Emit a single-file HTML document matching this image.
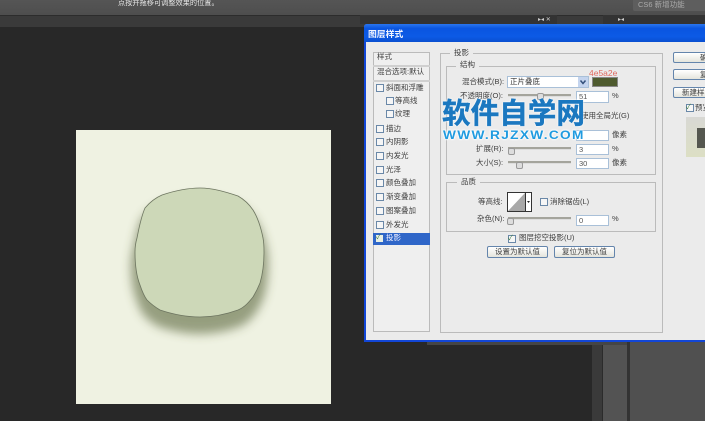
<!DOCTYPE html>
<html><head><meta charset="utf-8">
<style>
html,body{margin:0;padding:0}
body{width:705px;height:421px;overflow:hidden;position:relative;background:#282828;font-family:"Liberation Sans","Noto Sans CJK SC",sans-serif}
#w{position:absolute;left:0;top:0;width:705px;height:421px;filter:blur(.35px)}
.a{position:absolute}
.t{position:absolute;font-size:7.5px;line-height:12px;color:#3e3e3e;white-space:nowrap}
.cb{position:absolute;width:6px;height:6px;border:1px solid #6a88a8;background:#f6f6f6}
.ln{position:absolute;left:373px;width:57px;height:1px;background:#d0d0d0}
.fs{position:absolute;border:1px solid #bbb;box-sizing:border-box}
.lg{position:absolute;background:#ebebeb;font-size:7.5px;line-height:10px;padding:0 4px;color:#3e3e3e;white-space:nowrap}
.inp{position:absolute;box-sizing:border-box;width:34px;height:12px;background:#fff;border:1px solid #a9c0d8;font-size:7.5px;line-height:10px;padding-left:2px;color:#555}
.tr{position:absolute;height:2px;background:#a4a49c;border-bottom:1px solid #ddd;width:63px;left:508px}
.th{position:absolute;width:5px;height:5px;border:1px solid #999;border-radius:2px;background:#ddd}
.btn{position:absolute;box-sizing:border-box;height:12px;background:linear-gradient(#fff,#e4e4dc);border:1px solid #6485ac;border-radius:2px;font-size:7.5px;line-height:10px;color:#3e3e3e;text-align:center;white-space:nowrap;overflow:hidden}
</style></head><body><div id="w">
<div class="a" style="left:0;top:0;width:705px;height:15px;background:linear-gradient(#555,#4e4e4e)"></div>
<div class="t" style="left:118px;top:-3px;color:#e6e6e6;font-size:7.2px">点按并拖移可调整效果的位置。</div>
<div class="a" style="left:633px;top:0;width:72px;height:11px;background:#5e5e5e;border-radius:0 0 0 2px"></div>
<div class="t" style="left:638px;top:-1px;color:#aaa;font-size:7.5px">CS6 新增功能</div>
<div class="a" style="left:0;top:15px;width:705px;height:12px;background:#3a3a3a;border-top:1px solid #2c2c2c;box-sizing:border-box"></div>
<div class="a" style="left:360px;top:15px;width:197px;height:9px;background:#333"></div>
<div class="a" style="left:603px;top:15px;width:102px;height:9px;background:#333"></div>
<div class="t" style="left:538px;top:14px;color:#ccc;font-size:6px">▸◂ ✕</div>
<div class="t" style="left:618px;top:14px;color:#ccc;font-size:6px">▸◂</div>
<div class="a" style="left:592px;top:27px;width:10px;height:394px;background:#3a3a3a"></div>
<div class="a" style="left:602px;top:27px;width:1px;height:394px;background:#2b2b2b"></div>
<div class="a" style="left:603px;top:27px;width:24px;height:394px;background:#535353"></div>
<div class="a" style="left:627px;top:27px;width:3px;height:394px;background:#333"></div>
<div class="a" style="left:630px;top:27px;width:75px;height:394px;background:#505050"></div>
<div class="a" style="left:427px;top:341px;width:200px;height:4px;background:#454545"></div>

<div class="a" style="left:76px;top:130px;width:255px;height:274px;background:#eff2e2"></div>
<svg class="a" style="left:76px;top:130px" width="255" height="274" viewBox="76 130 255 274">
<defs><filter id="b" x="-30%" y="-30%" width="160%" height="160%"><feGaussianBlur stdDeviation="5"/></filter></defs>
<path transform="translate(0 13)" filter="url(#b)" opacity=".55" fill="#4e5a2e" stroke="#4e5a2e" stroke-width="8" d="M200 188C188 188 174 191 162 195C155 198 150 202 145 208C141 217 139 228 137 238C135.500 243 135 248 135 252C135 264 136 275 140 285C142 291 144 296 147 300C151 304 155 307 160 310C172 314 186 317 200 317C214 317 227 314 238 310C245 307 249 302 253 297C256 292 258 288 260 283C263 273 264 262 264 252C264 247 264 243 263 238C261 228 258 218 253 210C249 204 245 200 238 196C226 192 213 188 200 188Z"/>
<path fill="#cdd8b8" stroke="#6d7560" stroke-width=".8" d="M200 188C188 188 174 191 162 195C155 198 150 202 145 208C141 217 139 228 137 238C135.500 243 135 248 135 252C135 264 136 275 140 285C142 291 144 296 147 300C151 304 155 307 160 310C172 314 186 317 200 317C214 317 227 314 238 310C245 307 249 302 253 297C256 292 258 288 260 283C263 273 264 262 264 252C264 247 264 243 263 238C261 228 258 218 253 210C249 204 245 200 238 196C226 192 213 188 200 188Z"/>
</svg>

<div class="a" style="left:364px;top:24px;width:341px;height:318px;background:#ebebeb;border-radius:3px 0 0 0;box-shadow:inset 2px 0 0 #1246d6,inset 0 -2px 0 #1246d6"></div>
<div class="a" style="left:364px;top:24px;width:341px;height:18px;background:linear-gradient(#2a76ee,#0a55e0 25%,#0c5ae6 70%,#0a4fd0);border-radius:3px 0 0 0"></div>
<div class="t" style="left:368px;top:28px;color:#f2f5ff;font-size:8.8px;font-weight:bold">图层样式</div>

<div class="fs" style="left:373px;top:52px;width:57px;height:280px;background:#efefef"></div>
<div class="t" style="left:377px;top:51px">样式</div>
<div class="ln" style="top:65px;height:2px"></div>
<div class="t" style="left:377px;top:66px">混合选项:默认</div>
<div class="ln" style="top:80px;height:2px"></div>
<div class="cb" style="left:376px;top:84px"></div><div class="t" style="left:386px;top:82px">斜面和浮雕</div>
<div class="cb" style="left:386px;top:97px"></div><div class="t" style="left:395px;top:95px">等高线</div>
<div class="cb" style="left:386px;top:110px"></div><div class="t" style="left:395px;top:108px">纹理</div>
<div class="cb" style="left:376px;top:125px"></div><div class="t" style="left:386px;top:123px">描边</div>
<div class="cb" style="left:376px;top:138px"></div><div class="t" style="left:386px;top:136px">内阴影</div>
<div class="cb" style="left:376px;top:152px"></div><div class="t" style="left:386px;top:150px">内发光</div>
<div class="cb" style="left:376px;top:166px"></div><div class="t" style="left:386px;top:164px">光泽</div>
<div class="cb" style="left:376px;top:179px"></div><div class="t" style="left:386px;top:177px">颜色叠加</div>
<div class="cb" style="left:376px;top:193px"></div><div class="t" style="left:386px;top:191px">渐变叠加</div>
<div class="cb" style="left:376px;top:207px"></div><div class="t" style="left:386px;top:205px">图案叠加</div>
<div class="cb" style="left:376px;top:221px"></div><div class="t" style="left:386px;top:219px">外发光</div>
<div class="a" style="left:373px;top:233px;width:57px;height:12px;background:#2f66c8"></div>
<div class="a" style="left:376px;top:235px;width:7px;height:7px;background:#e8efe4"></div>
<div class="t" style="left:376px;top:232px;color:#3a7a3a;font-size:7px">✓</div>
<div class="t" style="left:386px;top:232px;color:#eef">投影</div>

<div class="fs" style="left:440px;top:53px;width:223px;height:280px"></div>
<div class="lg" style="left:450px;top:48px">投影</div>
<div class="fs" style="left:446px;top:66px;width:210px;height:109px"></div>
<div class="lg" style="left:456px;top:60px">结构</div>
<div class="t" style="left:462px;top:76px">混合模式(B):</div>
<div class="a" style="left:507px;top:76px;width:82px;height:12px;box-sizing:border-box;background:#fff;border:1px solid #a9c0d8"></div>
<div class="t" style="left:510px;top:76px;color:#333">正片叠底</div>
<div class="a" style="left:578px;top:77px;width:10px;height:10px;background:#c4d4ee"></div>
<svg class="a" style="left:578px;top:77px" width="10" height="10"><path d="M2.500 3.500L5 6.500L7.500 3.500" fill="none" stroke="#34507a" stroke-width="1.500"/></svg>
<div class="a" style="left:592px;top:77px;width:26px;height:10px;background:#4e5a2e;border:1px solid #888;box-sizing:border-box"></div>
<div class="t" style="left:589px;top:67px;color:#e06a60;font-size:8.5px">4e5a2e</div>

<div class="t" style="left:460px;top:90px">不透明度(O):</div>
<div class="tr" style="top:94px"></div><div class="th" style="left:537px;top:93px"></div>
<div class="inp" style="left:576px;top:91px;width:33px">51</div>
<div class="t" style="left:612px;top:90px">%</div>

<div class="t" style="left:581px;top:110px">使用全局光(G)</div>
<div class="inp" style="left:576px;top:130px;width:33px;height:11px"></div>
<div class="t" style="left:612px;top:129px">像素</div>

<div class="t" style="left:476px;top:143px">扩展(R):</div>
<div class="tr" style="top:147px"></div><div class="th" style="left:508px;top:148px"></div>
<div class="inp" style="left:576px;top:144px;width:33px;height:11px">3</div>
<div class="t" style="left:612px;top:143px">%</div>

<div class="t" style="left:476px;top:157px">大小(S):</div>
<div class="tr" style="top:161px"></div><div class="th" style="left:516px;top:162px"></div>
<div class="inp" style="left:576px;top:158px;width:33px;height:11px">30</div>
<div class="t" style="left:612px;top:157px">像素</div>

<div class="fs" style="left:446px;top:182px;width:210px;height:50px"></div>
<div class="lg" style="left:457px;top:177px">品质</div>
<div class="t" style="left:478px;top:196px">等高线:</div>
<div class="a" style="left:507px;top:192px;width:25px;height:20px;box-sizing:border-box;border:1px solid #333;background:#fff"></div>
<svg class="a" style="left:508px;top:193px" width="23" height="18"><path d="M0 18L17 0V18Z" fill="#a8a8a8"/><rect x="17" width="1" height="18" fill="#333"/><path d="M19 8h3l-1.500 2z" fill="#222"/></svg>
<div class="cb" style="left:540px;top:198px"></div>
<div class="t" style="left:550px;top:196px">消除锯齿(L)</div>
<div class="t" style="left:477px;top:213px">杂色(N):</div>
<div class="tr" style="top:217px"></div><div class="th" style="left:507px;top:218px"></div>
<div class="inp" style="left:576px;top:215px;width:33px;height:11px">0</div>
<div class="t" style="left:612px;top:213px">%</div>

<div class="cb" style="left:508px;top:235px"></div>
<div class="t" style="left:508px;top:233px;color:#3a7a3a;font-size:7px">✓</div>
<div class="t" style="left:519px;top:232px">图层挖空投影(U)</div>
<div class="btn" style="left:487px;top:246px;width:61px">设置为默认值</div>
<div class="btn" style="left:554px;top:246px;width:61px">复位为默认值</div>

<div class="btn" style="left:673px;top:52px;width:40px;height:11px;text-align:left;padding-left:26px">确</div>
<div class="btn" style="left:673px;top:69px;width:40px;height:11px;text-align:left;padding-left:26px">复</div>
<div class="btn" style="left:673px;top:87px;width:40px;height:11px;text-align:left;padding-left:8px">新建样式</div>
<div class="cb" style="left:686px;top:104px"></div>
<div class="t" style="left:686px;top:102px;color:#3a7a3a;font-size:7px">✓</div>
<div class="t" style="left:695px;top:102px">预览</div>
<div class="a" style="left:686px;top:117px;width:19px;height:40px;background:linear-gradient(#d8d8d4,#dcdfc4)"></div>
<div class="a" style="left:697px;top:128px;width:8px;height:20px;background:#55574f"></div>

<div class="a" style="left:442px;top:99px;font-size:28.6px;line-height:30px;font-weight:bold;color:#1b78c0;white-space:nowrap;-webkit-text-stroke:.5px #1b78c0;text-shadow:0 0 2px #fff,0 0 2px #fff">软件自学网</div>
<div class="a" style="left:443px;top:129px;font-size:11.5px;line-height:14px;font-weight:bold;color:#1f9be0;white-space:nowrap;letter-spacing:1.1px;transform:scaleX(1.19);transform-origin:0 0;text-shadow:0 0 2px #fff,0 0 2px #fff,0 0 2px #fff">WWW.RJZXW.COM</div>
</div></body></html>
